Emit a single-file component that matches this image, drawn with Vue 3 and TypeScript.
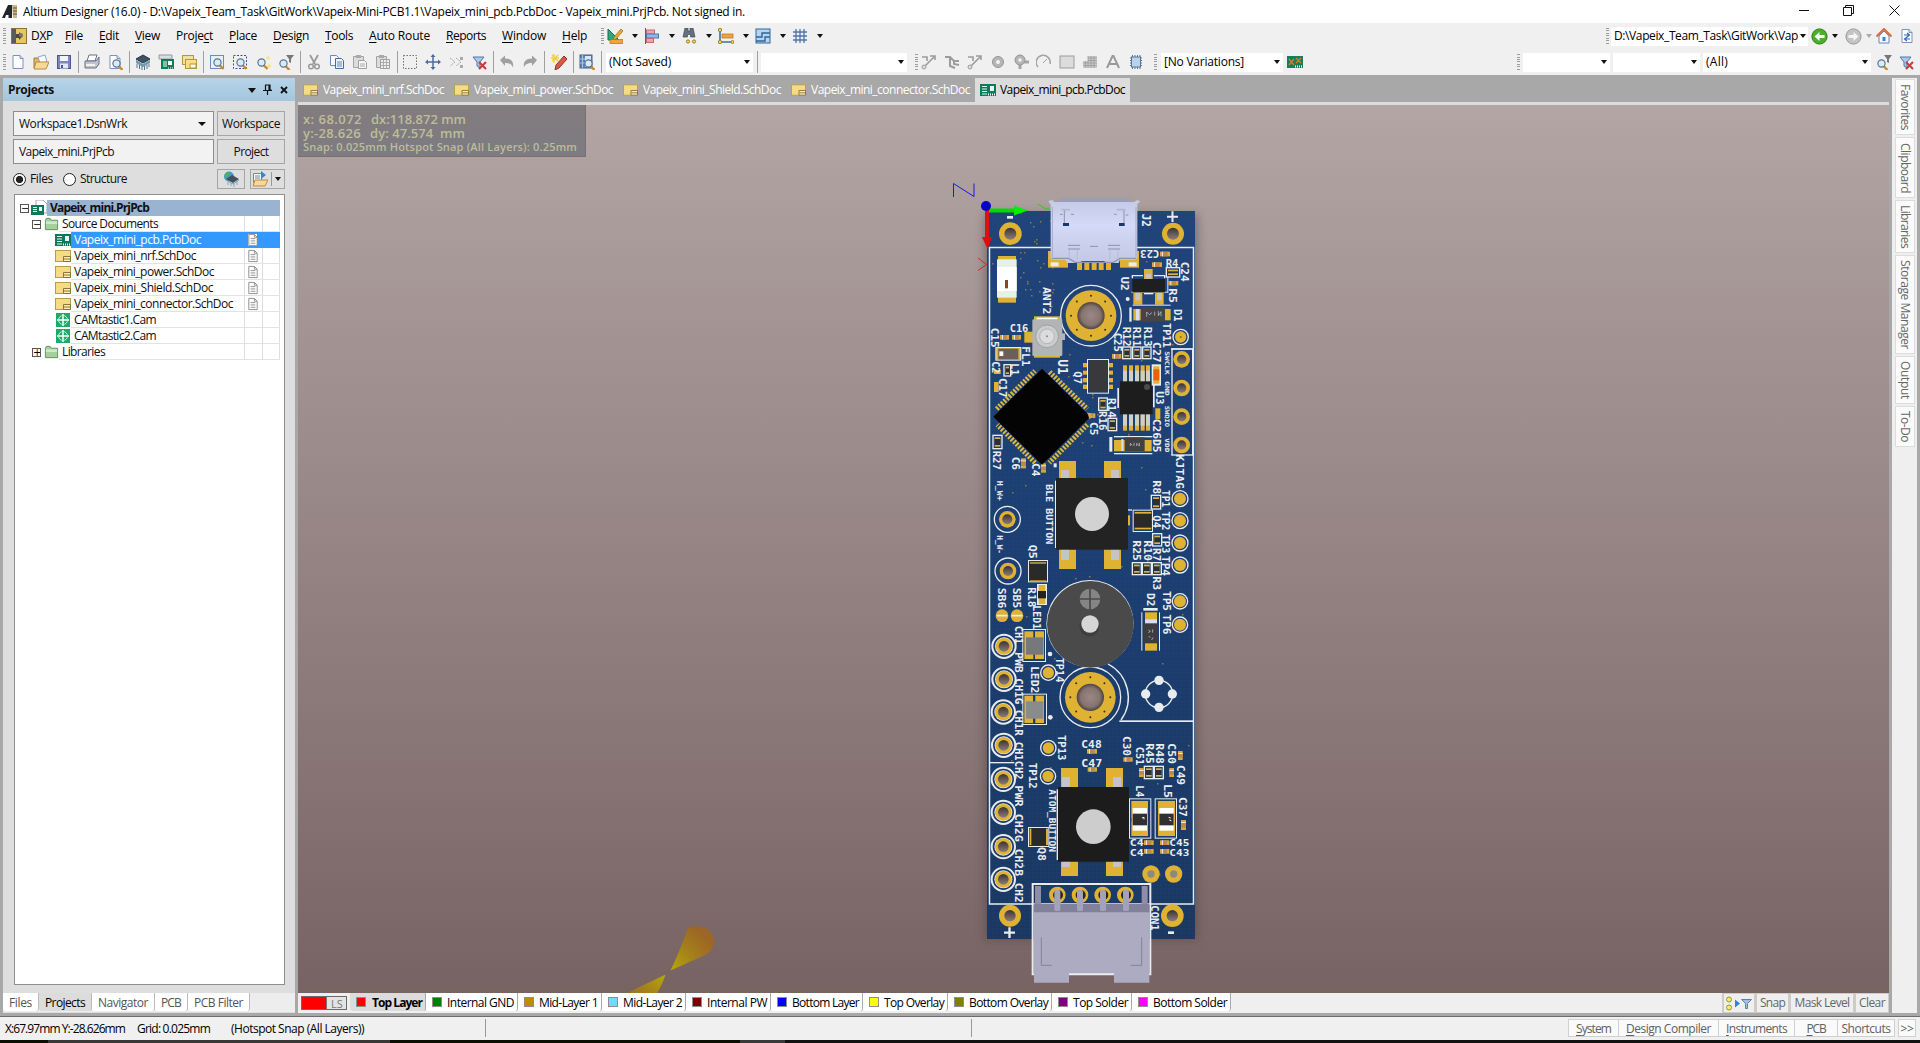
<script setup lang="ts">
type Box = [number, number, number, number]
type Label = [string, number, number, number, number]
type Ring = [number, number, number, number, number]

interface Fitted { t: string; w: number; u?: number }

const vFit = {
  mounted(el: HTMLElement, b: { value: number }) {
    const vertical = el.classList.contains('vert')
    const r = el.getBoundingClientRect()
    const natural = vertical ? r.height : r.width
    const n = Array.from(el.textContent || '').length
    el.style.letterSpacing = ((b.value - natural) / n).toFixed(3) + 'px'
  },
}

const menus: Fitted[] = [
  { t: 'DXP', w: 22, u: 1 }, { t: 'File', w: 18, u: 0 }, { t: 'Edit', w: 20, u: 0 }, { t: 'View', w: 25, u: 0 },
  { t: 'Project', w: 37, u: 5 }, { t: 'Place', w: 28, u: 0 }, { t: 'Design', w: 36, u: 0 }, { t: 'Tools', w: 28, u: 0 },
  { t: 'Auto Route', w: 61, u: 0 }, { t: 'Reports', w: 40, u: 0 }, { t: 'Window', w: 44, u: 0 }, { t: 'Help', w: 25, u: 0 },
]

const doc = '<path d="M3 1.5h7l3 3v10H3z" fill="#fdfeff" stroke="#7d93b5"/><path d="M10 1.5v3h3" fill="#cfe0f4" stroke="#7d93b5"/>'
const lens = '<path d="M10.5 11l4 4" stroke="#c98a2a" stroke-width="2.4"/><circle cx="8.5" cy="8.5" r="3.6" fill="#d7ebfa" stroke="#5c748f" stroke-width="1.2"/>'
const funnel = '<path d="M2 3h11l-4 5v6l-3-2V8z" fill="#a9c8e8" stroke="#5576a4"/>'
const icons: Record<string, string> = {
  dxp: '<rect x=".5" y=".5" width="15" height="15" fill="#e8c65a" stroke="#8a7434"/><path d="M1 1h4v14H1z" fill="#5b5a58"/><path d="M5 6h3V4l4 4-4 4v-2H5z" fill="#4a4a4a"/><circle cx="10" cy="7" r="2" fill="#777"/>',
  file: doc,
  open: '<path d="M1 4h5l1 1h6v9H1z" fill="#e3b465" stroke="#a57a35"/><path d="M5 3l7-2 2 7-7 1z" fill="#f6fafe" stroke="#8fa6c4"/><path d="M3 8h13l-3 7H1z" fill="#f7d896" stroke="#b98b3f"/>',
  save: '<rect x="1.5" y="1.5" width="13" height="13" fill="#7d86c0" stroke="#4d5695"/><rect x="4" y="2" width="8" height="5" fill="#f2f4fc"/><rect x="4" y="9.500" width="8" height="5" fill="#e3e6f4"/><rect x="5" y="11" width="2" height="3" fill="#4d5695"/>',
  print: '<path d="M5 1h8l-2 6H3z" fill="#fff" stroke="#6d6f80"/><path d="M1 7h11l3-4v7l-3 4H1z" fill="#c0c4d0" stroke="#6d7184"/><path d="M2 11h9" stroke="#f2f2f2" stroke-width="2"/>',
  preview: doc + '<g transform="translate(1 1)">' + lens + '</g>',
  stack: '<path d="M8 1l7 4-7 4-7-4z" fill="#3e5263" stroke="#273846"/><path d="M1 6l7 4 7-4v3l-7 4-7-4z" fill="#6f99ad"/><path d="M2 10v4M4.500 11v4M7 12v4M9.500 12v4M12 11v4M14 10v3" stroke="#587488"/>',
  board: '<path d="M1 1h13v4H1z" fill="#d8dde2" stroke="#939aa2"/><rect x="3" y="5" width="13" height="10" fill="#0f7d57"/><path d="M5 8h4M5 10h4M5 12h4" stroke="#fff"/><rect x="10" y="7" width="4" height="4" fill="#fff"/><path d="M10 14h5" stroke="#fff" stroke-dasharray="1 1"/>',
  sheets: '<rect x="1.500" y="1.500" width="11" height="9" fill="#f2e0a0" stroke="#b39542"/><rect x="4.500" y="5.500" width="11" height="9" fill="#f8df83" stroke="#b39542"/><rect x="9" y="10" width="6" height="4" fill="#fff" stroke="#b39542"/>',
  zoomdoc: '<rect x="1.500" y="1.500" width="13" height="13" fill="#e7f1fb" stroke="#6a8dbc"/>' + lens,
  zoomarea: '<rect x="1.500" y="1.500" width="13" height="13" fill="none" stroke="#3e4ea5" stroke-dasharray="2 1.500"/>' + lens,
  zoomsel: '<g transform="translate(-2 0)">' + lens + '</g><circle cx="13" cy="4" r="1.800" fill="#f3e67a"/><circle cx="14" cy="12" r="1.800" fill="#f3e67a"/>',
  zoomfil: '<path d="M8 1h8l-3 4v4l-2-1V5z" fill="#777"/><g transform="translate(-3 1)">' + lens + '</g>',
  cut: '<path d="M4 1l5 9M12 1L7 10" stroke="#9a9a9a" stroke-width="1.800"/><circle cx="5" cy="12.500" r="2.300" fill="none" stroke="#9a9a9a" stroke-width="1.500"/><circle cx="11" cy="12.500" r="2.300" fill="none" stroke="#9a9a9a" stroke-width="1.500"/>',
  copy: '<path d="M1.500 1.500h6l2 2v8h-8z" fill="#f6faff" stroke="#6c86b5"/><path d="M6.500 4.500h6l2 2v8h-8z" fill="#e9f1fb" stroke="#4d6aa0"/><path d="M8 8h5M8 10h5M8 12h5" stroke="#6c86b5"/>',
  paste: '<path d="M1.500 2.500h10v11h-10z" fill="#ddd" stroke="#a3a3a3"/><path d="M4 1h5v3H4z" fill="#aaa"/><path d="M6.500 6.500h6l2 2v6h-8z" fill="#f5f5f5" stroke="#9f9f9f"/><path d="M8 10h5M8 12h5" stroke="#aaa"/>',
  pastes: '<path d="M1.500 2.500h10v11h-10z" fill="#ddd" stroke="#a3a3a3"/><path d="M4 1h5v3H4z" fill="#aaa"/><path d="M5.500 5.500h9v9h-9z" fill="#eee" stroke="#9f9f9f"/><path d="M6 8.500h8M6 11.500h8M8.500 6v8M11.500 6v8" stroke="#aaa"/>',
  select: '<rect x="1.500" y="1.500" width="13" height="13" fill="none" stroke="#707070" stroke-dasharray="1.500 1.500"/>',
  move: '<path d="M8 1v14M1 8h14" stroke="#4e6c99" stroke-width="1.500"/><path d="M8 0l2.500 3h-5zM8 16l2.500-3h-5zM0 8l3-2.500v5zM16 8l-3-2.500v5z" fill="#4e6c99"/>',
  desel: '<path d="M2 4l5 4-5 4M8 4l5 4-5 4" fill="none" stroke="#a5a5a5" stroke-dasharray="2 1"/><path d="M12 3h3v3h-3zM12 11h3v3h-3z" fill="#aaa"/>',
  clearfil: funnel + '<path d="M8 8l7 7M15 8l-7 7" stroke="#c93a3a" stroke-width="2"/>',
  undo: '<path d="M1 6l5-4.500v3c6 0 9 3 8 9-1-3-3-4.500-8-4.500v3z" fill="#a0a0a0"/>',
  redo: '<path d="M15 6l-5-4.500v3c-6 0-9 3-8 9 1-3 3-4.500 8-4.500v3z" fill="#a0a0a0"/>',
  pen: '<path d="M3 0v9M0 4h8M1 1l6 6M7 1L1 7" stroke="#f1d23c" stroke-width="1.500"/><path d="M13 2l3 3-8 9-4 2 1-5z" fill="#dc5a45" stroke="#8f3527"/>',
  browse: '<rect x="1" y="1" width="12" height="13" fill="#5b83b8" stroke="#41638f"/><path d="M6 2h6v11H6z" fill="#dbe6f3"/><path d="M3.500 1v13M1 5h5M1 9h5" stroke="#a9c3e2"/><g transform="translate(1 1)">' + lens + '</g>',
  tools: '<path d="M1 1v11h11z" fill="#2fa77c" stroke="#12704e"/><path d="M14 1l2 2-7 8-3 1 1-3z" fill="#e5a93b" stroke="#8f651a" stroke-width=".7"/><rect x="3" y="11.500" width="13" height="4" fill="#f0a43c" stroke="#b5701a" stroke-width=".7"/>',
  align: '<path d="M1.500 0v16" stroke="#8b4d55"/><rect x="2.500" y="2" width="8" height="4" fill="#f2a2a6" stroke="#c06c72"/><rect x="2.500" y="6" width="12" height="4" fill="#8cb8ea" stroke="#4478b4"/><rect x="2.500" y="10.500" width="7" height="4" fill="#f2a2a6" stroke="#c06c72"/>',
  find: '<path d="M4 0h3v3h2V0h3l2 9H9.500V6.500h-3V9H2z" fill="#66707c" stroke="#444c57" stroke-width=".7"/><circle cx="7" cy="13.500" r="1.600" fill="#f1d75f" stroke="#9a7f23"/><circle cx="13" cy="13.500" r="1.600" fill="#f1d75f" stroke="#9a7f23"/>',
  dims: '<path d="M2 2v12h13" stroke="#3e6ea8" fill="none" stroke-width="1.600"/><rect x="4" y="6" width="11" height="4" fill="#f0a43c" stroke="#b5701a" stroke-width=".7"/><circle cx="2" cy="2" r="1.700" fill="#f1d75f" stroke="#9a7f23"/><circle cx="2" cy="14" r="1.700" fill="#f1d75f" stroke="#9a7f23"/><circle cx="14.500" cy="14" r="1.500" fill="#f1d75f" stroke="#9a7f23"/>',
  room: '<rect x="1" y="1" width="14" height="14" fill="#b8d3ee" stroke="#2f6499"/><path d="M1 9h6V5h8M1 13h9V9h5" stroke="#2f6499" fill="none" stroke-width="1.400"/>',
  grid: '<path d="M4 1v14M8 1v14M12 1v14M1 4h14M1 8h14M1 12h14" stroke="#5176a8" stroke-width="1.300"/>',
  route: '<path d="M4 12L13 3M1 3h5v4M9 2h5v4" stroke="#9c9c9c" fill="none" stroke-width="1.600"/><circle cx="3" cy="13" r="2" fill="#ddd" stroke="#9c9c9c"/>',
  route2: '<path d="M1 3h5l4 4h5M6 3v9l5 2M10 7v3l5 1" stroke="#9c9c9c" fill="none" stroke-width="2"/>',
  pad: '<circle cx="8" cy="8" r="5.500" fill="#b5b5b5" stroke="#969696"/><circle cx="8" cy="8" r="2" fill="#f4f4f4"/>',
  via: '<path d="M7 8h9M7 6v9" stroke="#a6a6a6" stroke-width="3"/><circle cx="7" cy="6" r="5" fill="#b5b5b5" stroke="#969696"/><circle cx="7" cy="6" r="1.800" fill="#f4f4f4"/>',
  arc: '<path d="M2 13a7 7 0 1 1 12-3" fill="none" stroke="#a2a2a2" stroke-width="1.500"/><path d="M7 9l4-4" stroke="#a2a2a2"/>',
  fill: '<rect x="1" y="2" width="14" height="12" fill="#dcdcdc" stroke="#9c9c9c"/>',
  poly: '<path d="M1 7h5V2h9v12H1z" fill="#c9c9c9"/><path d="M1 9h14M1 11.500h14M6 6.500h9M6 4h9M3.500 7v7M6 2v12M9 2v12M12 2v12" stroke="#9c9c9c" stroke-width=".8"/>',
  str: '<path d="M2 14L7.500 2h1L14 14M4.500 10h7" fill="none" stroke="#9a9a9a" stroke-width="2"/>',
  chip: '<path d="M2 4h12M2 6.500h12M2 9h12M2 11.500h12M4.500 1v14M7 1v14M9.500 1v14M12 1v14" stroke="#5a7896"/><rect x="3.500" y="3" width="9" height="10" fill="#b9d4ea" stroke="#5a7896"/>',
  variant: '<rect x="0" y="2" width="16" height="12" fill="#11805c"/><path d="M2 5l5 6M7 5l-5 6M9 4l5 5M14 4L9 9" stroke="#e0762b" stroke-width="1.500"/><path d="M8 12.500h7" stroke="#fff" stroke-width="2" stroke-dasharray="1 1"/>',
  back: '<circle cx="8" cy="8" r="7.600" fill="#4caf2a" stroke="#2b7a12"/><path d="M3 8l5-4.500v3h5v3H8v3z" fill="#fff"/>',
  fwd: '<circle cx="8" cy="8" r="7.600" fill="#c4c4c4" stroke="#989898"/><path d="M13 8L8 3.500v3H3v3h5v3z" fill="#f6f6f6"/>',
  home: '<path d="M3 8v7h10V8L8 3z" fill="#f4f8fd" stroke="#6c86ae"/><path d="M0.500 8.500L8 1l7.500 7.500" fill="none" stroke="#dc6a3a" stroke-width="2"/><path d="M6.500 9h3v4h-3z" fill="#3f82d6"/>',
  refresh: doc + '<path d="M5 7h5M8 5l2.500 2L8 9M11 11H6M8 9l-2.500 2L8 13" fill="none" stroke="#2d6cc0" stroke-width="1.200"/>',
  sch: '<rect x=".5" y="2.500" width="15" height="11" fill="#f4dc85" stroke="#bd9d4c"/><path d="M8.500 8.500h7v5h-7zM9 11h6" fill="#fbeeb9" stroke="#8d7434"/>',
  pcb: '<rect x="0" y="2" width="16" height="12" fill="#0e7a5a"/><path d="M2 4.500h5M2 7h5M2 9.500h5M2 12h5" stroke="#e9f7f0"/><rect x="10" y="4" width="4" height="5" fill="#e9f7f0"/><path d="M8 12.500h8" stroke="#fff" stroke-width="2" stroke-dasharray="1 1"/>',
  prj: '<path d="M5 0h7l4 4v9H5z" fill="#fff" stroke="#98a4c4"/><rect x="0" y="5" width="13" height="10" fill="#0e7a5a"/><path d="M2 7.500h4M2 9.500h4M2 11.500h4" stroke="#e9f7f0"/><rect x="8" y="7" width="3" height="4" fill="#e9f7f0"/>',
  folder: '<path d="M1.500 4l1-2h4l1 2h7v10h-13z" fill="#a5cf9d" stroke="#5f8f5b"/><path d="M2 5h12v3H2z" fill="#cde8c6"/>',
  cam: '<rect x="1" y="1" width="14" height="14" fill="#1faa6c"/><path d="M8 2v12M2 8h12" stroke="#fff" stroke-width="1.500"/><circle cx="8" cy="8" r="4.500" fill="none" stroke="#bff0d8"/>',
  page: '<path d="M2.500 1.500h6l3 3v9h-9zM8.500 1.500v3h3M4.500 6h5M4.500 8.500h5M4.500 11h5" fill="none" stroke="#8b8b8b"/>',
  world: '<circle cx="6" cy="5.500" r="5" fill="#3f9bd0"/><path d="M2 3c3-3 5-1 4 1s-3 2-3 4z" fill="#54b348"/><path d="M9 4l7 4-6 4-7-4z" fill="#45505c"/><path d="M3 9l7 4 6-4M5 11v3M8 12v3M11 12v4M14 10v4" stroke="#7fa5b8" fill="none"/>',
  opendoc: '<path d="M1.500 2.500h8v9h-8z" fill="#f2f7fd" stroke="#6c86b5"/><path d="M3 5h5M3 7h5" stroke="#6c86b5"/><path d="M9 0l5 4-5 4z" fill="#3d7fe0"/><path d="M3 9h13l-3 6H1z" fill="#f7d896" stroke="#b98b3f"/>',
  snapf: '<circle cx="3" cy="3.500" r="2.500" fill="#f2ef6c" stroke="#99962b"/><circle cx="3" cy="11.500" r="2.500" fill="#f2ef6c" stroke="#99962b"/><path d="M9 3.500v8l5-4z" fill="#2f83d8"/><path d="M15.500 3.500h10l-4 4v5h-2v-5z" fill="#a4bde4" stroke="#5f7fb8"/>',
}

const row1 = ['tools', 'align', 'find', 'dims', 'room', 'grid']
type Cell = string | number
// numbers are separators with their slot width
const row2: Cell[] = ['file', 'open', 'save', 5, 'print', 'preview', 5, 'stack', 'board', 'sheets', 5, 'zoomdoc', 'zoomarea', 'zoomsel', 'zoomfil', 5,
  'cut', 'copy', 'paste', 'pastes', 4, 'select', 'move', 'desel', 'clearfil', 5, 'undo', 'redo', 6, 'pen', 5, 'browse', 6]
const row2b = ['route', 'route2', 'route', 'pad', 'via', 'arc', 'fill', 'poly', 'str', 'chip']

const docTabs = [
  { t: 'Vapeix_mini_nrf.SchDoc', w: 121 }, { t: 'Vapeix_mini_power.SchDoc', w: 139 },
  { t: 'Vapeix_mini_Shield.SchDoc', w: 138 }, { t: 'Vapeix_mini_connector.SchDoc', w: 159 },
]

const tree = [
  { t: 'Vapeix_mini.PrjPcb', w: 99, d: 0, ic: 'prj', ex: '-', cls: 'root', pg: false },
  { t: 'Source Documents', w: 96, d: 1, ic: 'folder', ex: '-', cls: '', pg: false },
  { t: 'Vapeix_mini_pcb.PcbDoc', w: 127, d: 2, ic: 'pcb', ex: '', cls: 'sel', pg: true },
  { t: 'Vapeix_mini_nrf.SchDoc', w: 122, d: 2, ic: 'sch', ex: '', cls: '', pg: true },
  { t: 'Vapeix_mini_power.SchDoc', w: 140, d: 2, ic: 'sch', ex: '', cls: '', pg: true },
  { t: 'Vapeix_mini_Shield.SchDoc', w: 139, d: 2, ic: 'sch', ex: '', cls: '', pg: true },
  { t: 'Vapeix_mini_connector.SchDoc', w: 159, d: 2, ic: 'sch', ex: '', cls: '', pg: true },
  { t: 'CAMtastic1.Cam', w: 82, d: 2, ic: 'cam', ex: '', cls: '', pg: false },
  { t: 'CAMtastic2.Cam', w: 82, d: 2, ic: 'cam', ex: '', cls: '', pg: false },
  { t: 'Libraries', w: 43, d: 1, ic: 'folder', ex: '+', cls: '', pg: false },
]

const panelTabs = [{ t: 'Files', w: 23 }, { t: 'Projects', w: 40 }, { t: 'Navigator', w: 50 }, { t: 'PCB', w: 20 }, { t: 'PCB Filter', w: 49 }]
const layers = [
  { t: 'Top Layer', w: 50, c: '#ff0000' }, { t: 'Internal GND', w: 67, c: '#008000' }, { t: 'Mid-Layer 1', w: 59, c: '#bd8f00' },
  { t: 'Mid-Layer 2', w: 59, c: '#70dbfa' }, { t: 'Internal PW', w: 60, c: '#800000' }, { t: 'Bottom Layer', w: 67, c: '#0000ff' },
  { t: 'Top Overlay', w: 60, c: '#ffff00' }, { t: 'Bottom Overlay', w: 79, c: '#808000' }, { t: 'Top Solder', w: 55, c: '#800080' },
  { t: 'Bottom Solder', w: 74, c: '#ff00ff' },
]
const maskBtns = [{ t: 'Snap', w: 25, b: 34 }, { t: 'Mask Level', w: 55, b: 65 }, { t: 'Clear', w: 26, b: 35 }]
const statusBtns = [{ t: 'System', w: 35, b: 50, u: 0 }, { t: 'Design Compiler', w: 85, b: 100, u: 0 }, { t: 'Instruments', w: 61, b: 76, u: 0 }, { t: 'PCB', w: 19, b: 43, u: 0 }, { t: 'Shortcuts', w: 49, b: 57, u: -1 }]
const sideTabs = [{ t: 'Favorites', w: 46, h: 56 }, { t: 'Clipboard', w: 50, h: 61 }, { t: 'Libraries', w: 43, h: 53 }, { t: 'Storage Manager', w: 89, h: 99 }, { t: 'Output', w: 38, h: 48 }, { t: 'To-Do', w: 31, h: 41 }]

interface Zone {
  at: string
  under: [number, number, number, number, string][]
  rings: Ring[]
  parts: Box[]
  caps: Box[]
  v: Label[]
  h: Label[]
}
const G = '#dfb233', K = '#2a2a2b', S = '#c4c4c6', N = '#1c3d69', W = '#e9ecef'
// Coordinates inside a zone are in thirds of a pixel. Rings: cx, cy, silk, copper, hole.
const zones: Zone[] = [
  {
    at: 'translate(940 175) scale(.33333)',
    under: [
      [324, 228, 60, 50, G], [540, 228, 57, 50, G], [332, 262, 24, 12, W], [566, 262, 24, 12, W],
      [411, 262, 15, 23, G], [433, 262, 15, 23, G], [455, 262, 15, 23, G], [476, 262, 15, 23, G], [498, 262, 15, 23, G],
      [174, 243, 54, 140, G], [171, 253, 59, 115, '#e6f2e6'], [171, 276, 59, 72, '#ffffff'], [195, 315, 9, 25, '#8a4a10'],
      [201, 123, 18, 8, W],
      [282, 424, 78, 124, G], [253, 470, 30, 33, G], [290, 428, 62, 8, '#fff'],
      [612, 282, 26, 30, G], [617, 297, 16, 14, S], [574, 350, 108, 3, W], [580, 352, 27, 37, G], [645, 352, 26, 37, G], [612, 354, 28, 4, W],
      [586, 352, 15, 24, S], [651, 352, 15, 24, S], [578, 389, 114, 3, W],
      [568, 397, 7, 43, W], [580, 402, 112, 34, G], [588, 402, 10, 34, '#dcdcf0'], [602, 397, 73, 43, '#454547'], [682, 304, 3, 50, W],
      [166, 516, 78, 41, W], [169, 519, 72, 36, G], [175, 521, 60, 32, '#6b5f5c'], [178, 529, 12, 14, '#fff4f6'],
      [694, 520, 61, 4, W],
    ],
    rings: [[211, 176, 0, 34, 18], [699, 176, 0, 33, 18], [453, 422, 91, 76, 41], [722, 486, 23, 17, 0]],
    parts: [[548, 516, 25, 35], [578, 516, 25, 35], [608, 516, 25, 35], [679, 278, 40, 28]],
    caps: [[180, 480, 27, 14], [216, 480, 27, 14], [660, 230, 30, 14], [636, 262, 30, 14], [685, 318, 30, 13], [516, 537, 28, 14]],
    v: [['J2', 607, 116, 40, 36], ['C24', 723, 260, 60, 34], ['U2', 544, 305, 42, 34], ['R5', 688, 340, 44, 32], ['D1', 703, 402, 38, 32], ['TP11', 669, 444, 74, 32],
      ['ANT2', 309, 336, 82, 32], ['C15', 154, 458, 60, 32], ['FL1', 246, 514, 60, 32], ['R12', 550, 455, 60, 30], ['R11', 580, 455, 60, 30], ['R13', 611, 455, 60, 30],
      ['C25', 521, 473, 58, 30], ['C27', 638, 501, 62, 32]],
    h: [['R4', 677, 275, 38, 34], ['C16', 209, 470, 56, 34]],
  },
  {
    at: 'translate(970 340) scale(.33333)',
    under: [
      [72, 126, 14, 30, G], [72, 90, 20, 12, G],
      [339, 69, 90, 13, G], [339, 92, 90, 12, G], [339, 114, 90, 13, G], [339, 134, 90, 13, G], [351, 57, 66, 104, W], [354, 60, 60, 98, N], [357, 60, 54, 95, '#39393b'],
      [442, 144, 5, 60, W], [549, 130, 5, 72, W],
      ...[459, 477, 495, 512, 528].flatMap((x) => [[x, 76, 12, 196, G], [x, 92, 12, 165, '#d0cfc4']] as [number, number, number, number, string][]),
      [450, 124, 98, 99, '#1d1d1e'],
      [545, 73, 28, 64, W], [550, 79, 18, 52, G], [550, 88, 18, 33, '#e8620c'],
      [556, 205, 15, 32, G],
      [432, 288, 115, 4, W], [432, 339, 115, 4, W], [418, 291, 9, 44, W], [432, 300, 113, 34, G], [454, 297, 6, 36, '#dcdcf0'], [464, 292, 60, 42, '#414143'],
      [251, 370, 9, 12, W],
      [267, 363, 51, 53, G], [402, 363, 51, 53, G], [267, 628, 51, 59, G], [402, 628, 51, 59, G],
      [273, 390, 24, 26, S], [423, 390, 24, 26, S], [273, 628, 24, 32, S], [423, 628, 24, 32, S],
      [255, 422, 4, 202, W], [258, 414, 216, 215, '#232324'],
      [474, 508, 12, 4, W], [474, 526, 6, 30, G],
      [488, 509, 61, 67, W], [491, 512, 55, 61, N], [494, 516, 50, 52, G], [492, 521, 53, 42, K],
      [174, 660, 60, 67, W], [177, 663, 54, 61, N], [180, 667, 48, 56, G], [178, 671, 53, 50, K],
      [604, 25, 66, 4, W], [604, 25, 4, 321, W], [666, 25, 4, 321, W], [604, 343, 66, 4, W],
    ],
    rings: [[635, 58, 0, 25, 14], [635, 144, 0, 25, 14], [635, 230, 0, 25, 14], [635, 315, 0, 25, 14], [112, 538, 39, 25, 15], [114, 693, 39, 25, 15],
      [630, 476, 24, 18, 0], [630, 542, 24, 18, 0], [630, 609, 24, 18, 0], [630, 675, 24, 18, 0]],
    parts: [[386, 174, 26, 37], [414, 235, 26, 37], [69, 286, 27, 40], [544, 466, 28, 41], [548, 581, 27, 37], [487, 668, 27, 36], [517, 668, 27, 36], [547, 668, 27, 36], [102, 74, 20, 34]],
    caps: [[153, 355, 15, 30], [213, 370, 15, 28], [352, 220, 24, 14]],
    v: [['C2', 67, 64, 36, 30], ['L1', 122, 70, 36, 32], ['C17', 88, 114, 58, 32], ['U1', 263, 58, 46, 40], ['Q7', 311, 94, 38, 32], ['R14', 414, 174, 60, 30], ['R16', 388, 213, 58, 30],
      ['C5', 360, 246, 40, 32], ['U3', 557, 154, 40, 34], ['C26D5', 550, 236, 102, 34], ['R27', 69, 332, 58, 32], ['C6', 126, 350, 40, 32], ['C4', 187, 369, 40, 32],
      ['BLE BUTTON', 229, 433, 180, 26], ['H_W+', 81, 422, 60, 24], ['H_W-', 81, 586, 56, 24], ['Q5', 178, 614, 42, 34], ['Q4', 550, 526, 38, 32], ['R8', 548, 421, 42, 32],
      ['TP1', 577, 450, 52, 32], ['TP2', 577, 514, 57, 32], ['TP3', 577, 583, 57, 32], ['TP4', 577, 648, 60, 32], ['R7', 550, 624, 40, 32], ['R25', 490, 601, 62, 32], ['R10', 522, 601, 62, 32],
      ['KJTAG', 618, 343, 104, 32], ['SWCLK', 585, 34, 70, 18], ['GND', 585, 123, 44, 18], ['SWDIO', 585, 197, 64, 18], ['VDD', 585, 295, 42, 18]],
    h: [],
  },
  {
    at: 'translate(970 560) scale(.33333)',
    under: [
      [201, 72, 30, 63, W], [206, 75, 20, 57, G], [204, 93, 24, 22, '#222'],
      [157, 207, 71, 99, W], [160, 210, 65, 93, N], [163, 214, 27, 83, G], [195, 214, 27, 83, G], [168, 232, 52, 52, '#77787b'],
      [157, 401, 74, 94, W], [160, 404, 68, 88, N], [163, 407, 26, 82, G], [196, 407, 26, 82, G], [168, 424, 52, 52, '#8a8b8d'],
      [520, 144, 43, 8, W], [525, 157, 36, 115, G], [525, 178, 36, 14, '#dcdcf0'], [522, 190, 42, 60, '#3d3d3f'], [514, 157, 3, 115, W], [567, 157, 3, 115, W],
      [448, 481, 222, 5, W], [57, 606, 76, 4, W],
      [273, 625, 50, 40, G], [408, 625, 50, 40, G],
    ],
    rings: [[102, 259, 35, 25, 16], [102, 358, 35, 25, 16], [100, 456, 35, 25, 16], [101, 556, 35, 25, 16], [235, 338, 23, 17, 0], [235, 564, 23, 17, 0],
      [361, 412, 91, 76, 41], [630, 124, 23, 18, 0], [630, 194, 23, 18, 0]],
    parts: [[523, 619, 27, 37], [553, 619, 27, 37]],
    caps: [[351, 567, 30, 14], [353, 622, 28, 13], [460, 592, 28, 13], [507, 624, 14, 27], [598, 624, 14, 27], [624, 573, 14, 27]],
    v: [['SB6', 84, 83, 62, 32], ['SB5', 130, 83, 62, 32], ['R18', 173, 82, 60, 34], ['LED1', 188, 136, 72, 32], ['LED2', 184, 318, 82, 32], ['TP14', 258, 293, 74, 32], ['R3', 550, 49, 42, 32],
      ['D2', 531, 99, 40, 34], ['TP5', 580, 93, 60, 32], ['TP6', 580, 163, 60, 32], ['CH1', 136, 197, 56, 32], ['PWB', 136, 276, 62, 32], ['CH1G', 136, 355, 78, 32], ['CH1R', 136, 449, 78, 32],
      ['CH1CH2', 136, 545, 114, 32], ['TP13', 264, 525, 76, 32], ['C30', 460, 528, 60, 34], ['C51', 498, 560, 56, 32], ['R45', 527, 550, 62, 32], ['R48', 558, 550, 62, 32], ['C50', 595, 550, 62, 32]],
    h: [['C48', 334, 564, 61, 34], ['C47', 334, 620, 63, 34]],
  },
  {
    at: 'translate(970 730) scale(.33333)',
    under: [
      [273, 114, 51, 60, G], [408, 114, 51, 60, G], [273, 394, 51, 44, G], [408, 394, 51, 44, G],
      [276, 141, 24, 32, S], [429, 141, 24, 32, S], [276, 394, 24, 17, S], [429, 394, 24, 17, S],
      [174, 291, 64, 60, W], [177, 294, 58, 54, N], [179, 296, 55, 49, G], [184, 294, 44, 52, K], [260, 178, 4, 212, W], [264, 171, 213, 224, '#1c1c1d'],
      [477, 205, 67, 121, W], [480, 208, 61, 115, N], [484, 213, 50, 105, G], [488, 234, 43, 68, '#fff'], [488, 251, 43, 35, '#303033'], [480, 264, 4, 10, N],
      [554, 205, 67, 121, W], [557, 208, 61, 115, N], [564, 213, 51, 105, G], [568, 234, 43, 68, '#fff'], [568, 251, 43, 35, '#303033'],
      [594, 604, 18, 8, W],
    ],
    rings: [[234, 139, 23, 17, 0], [100, 148, 35, 25, 16], [100, 247, 35, 25, 16], [100, 350, 35, 25, 16], [100, 448, 35, 25, 16], [543, 432, 0, 26, 0], [611, 432, 0, 26, 0],
      [120, 557, 0, 33, 17], [607, 557, 0, 34, 17]],
    parts: [],
    caps: [[633, 270, 15, 30], [522, 331, 29, 14], [570, 331, 28, 14], [522, 357, 29, 14], [570, 357, 28, 14]],
    v: [['TP12', 178, 98, 78, 32], ['ATOM_BUTTON', 238, 178, 188, 26], ['Q8', 204, 351, 42, 32], ['L4', 498, 166, 36, 32], ['L5', 581, 162, 42, 34], ['C49', 622, 105, 60, 34], ['C37', 628, 201, 60, 34],
      ['PWR', 136, 166, 64, 32], ['CH2G', 136, 251, 84, 32], ['CH2B', 136, 356, 82, 32], ['CH2', 136, 458, 60, 32], ['CON1', 544, 526, 76, 34]],
    h: [['C4', 479, 348, 42, 25], ['C45', 598, 348, 60, 25], ['C43', 598, 378, 60, 25], ['C4', 479, 378, 42, 25]],
  },
]

// gold via specks scattered over the copper
const specks: [number, number][] = []
let seed = 11
const rnd = () => { seed = (seed * 16807) % 2147483647; return seed / 2147483647 }
for (let i = 0; i < 34; i++) specks.push([1020 + Math.floor(rnd() * 34), 219 + Math.floor(rnd() * 88)])
for (let i = 0; i < 60; i++) specks.push([992 + Math.floor(rnd() * 198), 250 + Math.floor(rnd() * 640)])
const dots = [0, 45, 90, 135, 180, 225, 270, 315].map((a) => [Math.cos((a * Math.PI) / 180) * 20, Math.sin((a * Math.PI) / 180) * 20])
</script>

<template>
  <div class="app">
    <header class="title">
      <svg class="logo" width="16" height="16" viewBox="0 0 16 16"><path d="M0 14L6 1h4v13H6.500v-3H4l-1 3z" fill="#22252a" /><path d="M10 1h5v13h-4z" fill="#c9b58a" /><path d="M11 4h4M11 7h4M11 10h4" stroke="#5d523c" /></svg>
      <span v-fit="722" class="fit">Altium Designer (16.0) - D:\Vapeix_Team_Task\GitWork\Vapeix-Mini-PCB1.1\Vapeix_mini_pcb.PcbDoc - Vapeix_mini.PrjPcb. Not signed in.</span>
      <svg class="winctl" width="104" height="16" viewBox="0 0 104 16" fill="none" stroke="#111"><path d="M0 8.500h10M44.500 5.500h8v8h-8zM46.500 5V3.500h8v8H53M90.500 3.500l10 10M100.500 3.500l-10 10" /></svg>
    </header>

    <div class="bar menu">
      <i class="grip" /><svg class="ic dxp" viewBox="0 0 16 16" v-html="icons.dxp" />
      <span v-for="m in menus" :key="m.t" class="m"><span v-fit="m.w" class="fit">{{ m.t.slice(0, m.u) }}<u>{{ m.t[m.u!] }}</u>{{ m.t.slice(m.u! + 1) }}</span></span>
      <i class="grip g2" />
      <span v-for="n in row1" :key="n" class="drop"><svg class="ic" viewBox="0 0 16 16" v-html="icons[n]" /><b class="tri" /></span>
      <span class="grow" />
      <i class="grip" />
      <span class="combo path"><span v-fit="184" class="fit">D:\Vapeix_Team_Task\GitWork\Vap</span><b class="tri" /></span>
      <svg class="ic big" viewBox="-.5 -.5 17 17" v-html="icons.back" /><b class="tri" />
      <svg class="ic big" viewBox="-.5 -.5 17 17" v-html="icons.fwd" /><b class="tri dim" />
      <svg class="ic hm" viewBox="0 0 16 16" v-html="icons.home" /><svg class="ic rf" viewBox="0 0 16 16" v-html="icons.refresh" />
    </div>

    <div class="bar tools">
      <i class="grip" />
      <template v-for="(c, i) in row2" :key="i">
        <i v-if="typeof c === 'number'" class="sep" :style="{ width: c + 'px' }" />
        <span v-else class="cell"><svg class="ic" viewBox="0 0 16 16" v-html="icons[c]" /></span>
      </template>
      <span class="combo ns"><span v-fit="62" class="fit">(Not Saved)</span><b class="tri" /></span>
      <i class="sep s8" />
      <span class="combo em"><span /><b class="tri" /></span>
      <i class="grip g3" />
      <span v-for="(n, i) in row2b" :key="'r' + i" class="cell"><svg class="ic" viewBox="0 0 16 16" v-html="icons[n]" /></span>
      <i class="grip g4" />
      <span class="combo nv"><span v-fit="80" class="fit">[No Variations]</span><b class="tri" /></span>
      <svg class="ic vr" viewBox="0 0 16 16" v-html="icons.variant" />
      <span class="grow" />
      <i class="grip" />
      <span class="combo c1"><span /><b class="tri" /></span>
      <span class="combo c1"><span /><b class="tri" /></span>
      <span class="combo all"><span v-fit="22" class="fit">(All)</span><b class="tri" /></span>
      <svg class="ic l1" viewBox="0 0 16 16" v-html="icons.zoomfil" /><svg class="ic l2" viewBox="0 0 16 16" v-html="icons.clearfil" />
    </div>

    <main class="work">
      <aside class="panel">
        <div class="phead">
          <b v-fit="46" class="fit">Projects</b>
          <svg width="44" height="12" viewBox="0 0 44 12"><path d="M1 4h8L5 9z" fill="#111" /><path d="M18 1h5v5h1.500M16 6.500h9M20.500 7v4M22 1v5M18.500 1v5" fill="none" stroke="#111" stroke-width="1.200" /><path d="M34 3l6 6M40 3l-6 6" stroke="#111" stroke-width="1.800" /></svg>
        </div>
        <div class="pform">
          <div class="frow"><span class="inp"><span v-fit="108" class="fit">Workspace1.DsnWrk</span><b class="tri big" /></span><span class="btn"><span v-fit="58" class="fit">Workspace</span></span></div>
          <div class="frow"><span class="inp"><span v-fit="95" class="fit">Vapeix_mini.PrjPcb</span></span><span class="btn"><span v-fit="35" class="fit">Project</span></span></div>
          <div class="frow radios">
            <i class="radio on" /><span v-fit="23" class="fit">Files</span><i class="radio r2" /><span v-fit="47" class="fit">Structure</span>
            <span class="grow" />
            <span class="sb"><svg class="ic" viewBox="0 0 16 16" v-html="icons.world" /></span>
            <span class="sb w"><svg class="ic" viewBox="0 0 16 16" v-html="icons.opendoc" /><i class="vl" /><b class="tri" /></span>
          </div>
        </div>
        <div class="tree">
          <div v-for="r in tree" :key="r.t" class="tr" :class="[r.cls, 'd' + r.d]">
            <span class="ind"><span v-if="r.ex" class="ex">{{ r.ex === '-' ? '−' : '+' }}</span></span>
            <svg class="ic" viewBox="0 0 16 16" v-html="icons[r.ic]" />
            <span class="name"><span v-fit="r.w" class="fit">{{ r.t }}</span></span>
            <span class="col c18"><svg v-if="r.pg" width="12" height="14" viewBox="1 0 12 15" :class="{ lit: r.cls === 'sel' }" v-html="icons.page" /></span>
            <span class="col c17" />
          </div>
        </div>
        <div class="ptabs">
          <span v-for="(p, i) in panelTabs" :key="p.t" class="ptab" :class="{ on: i === 1 }"><span v-fit="p.w" class="fit">{{ p.t }}</span></span>
        </div>
      </aside>

      <section class="doc">
        <div class="dtabs">
          <span v-for="d in docTabs" :key="d.t" class="dtab"><svg class="ic" viewBox="0 0 16 16" v-html="icons.sch" /><span v-fit="d.w" class="fit">{{ d.t }}</span></span>
          <span class="dtab on"><svg class="ic" viewBox="0 0 16 16" v-html="icons.pcb" /><span v-fit="125" class="fit">Vapeix_mini_pcb.PcbDoc</span></span>
        </div>
        <div class="canvas">
          <svg width="1591" height="888" viewBox="298 105 1591 888">
            <defs>
              <linearGradient id="hole" x1="0" y1="0" x2="0" y2="1"><stop offset="0" stop-color="#3a3433" /><stop offset="1" stop-color="#8d7c79" /></linearGradient>
              <radialGradient id="hole2"><stop offset="0" stop-color="#9b8886" /><stop offset=".7" stop-color="#86746f" /><stop offset="1" stop-color="#4e4340" /></radialGradient>
              <linearGradient id="pcbg" x1="0" y1="0" x2="0" y2="1"><stop offset="0" stop-color="#20437a" /><stop offset=".5" stop-color="#1c3e70" /><stop offset="1" stop-color="#1a3862" /></linearGradient>
              <linearGradient id="usb" x1="0" y1="0" x2="0" y2="1"><stop offset="0" stop-color="#c4c9e6" /><stop offset=".4" stop-color="#d3d9f6" /><stop offset="1" stop-color="#c3c8e4" /></linearGradient>
              <radialGradient id="fan" gradientUnits="userSpaceOnUse" cx="668" cy="972" r="52"><stop offset="0" stop-color="#b9ae00" /><stop offset=".5" stop-color="#a5841a" /><stop offset="1" stop-color="#9d6526" /></radialGradient>
              <pattern id="mesh" width="4" height="4" patternUnits="userSpaceOnUse"><path d="M0 0h2v2H0z" fill="#2a528c" opacity=".13" /></pattern>
              <filter id="soft" x="-10%" y="-5%" width="120%" height="110%"><feGaussianBlur stdDeviation="5" /></filter>
            </defs>
            <path d="M670.500 970.500C677 957 683 942 688 928c6-4 26-2 26 13 0 8-4 12-11 15zM665.500 974.500L627 993h30c4-6 7-13 8.500-18.500z" fill="url(#fan)" />
            <rect x="984" y="214" width="214" height="726" fill="#4b3d3d" opacity=".45" filter="url(#soft)" />
            <rect x="987" y="211" width="208" height="728" fill="url(#pcbg)" />
            <rect x="987" y="211" width="208" height="728" fill="url(#mesh)" />
            <rect v-for="(s, i) in specks" :key="'s' + i" :x="s[0]" :y="s[1]" width="1.500" height="1.500" fill="#8f7a3c" />
            <path d="M989 247.500H1193.500V904H989.500V247" fill="none" stroke="#e9ecef" stroke-width="1.500" />
            <path d="M1108 664a38 38 0 0 1 13 56" fill="none" stroke="#e9ecef" stroke-width="1.400" />

            <g v-for="z in zones" :key="z.at" :transform="z.at">
              <rect v-for="(u, i) in z.under" :key="i" :x="u[0]" :y="u[1]" :width="u[2]" :height="u[3]" :fill="u[4]" />
              <g v-for="(p, i) in z.parts" :key="'p' + i">
                <rect :x="p[0]" :y="p[1]" :width="p[2]" :height="p[3]" fill="#1c3d69" stroke="#e9ecef" stroke-width="4" />
                <rect :x="p[0] + 5" :y="p[1] + 6" :width="p[2] - 10" :height="p[3] - 12" fill="#d8b24a" />
                <rect :x="p[0] + 5" :y="p[1] + 11" :width="p[2] - 10" :height="p[3] - 22" fill="#2d2f36" />
              </g>
              <g v-for="(p, i) in z.caps" :key="'c' + i">
                <rect :x="p[0]" :y="p[1]" :width="p[2]" :height="p[3]" fill="#d9a83a" />
                <rect :x="p[2] > p[3] ? p[0] + 7 : p[0]" :y="p[2] > p[3] ? p[1] : p[1] + 7" :width="p[2] > p[3] ? p[2] - 14 : p[2]" :height="p[2] > p[3] ? p[3] : p[3] - 14" fill="#b98a4c" />
                <rect :x="p[2] > p[3] ? p[0] + 6 : p[0]" :y="p[2] > p[3] ? p[1] : p[1] + 6" :width="p[2] > p[3] ? 3 : p[2]" :height="p[2] > p[3] ? p[3] : 3" fill="#ece6d6" />
              </g>
              <g v-for="(r, i) in z.rings" :key="'r' + i">
                <circle v-if="r[2]" :cx="r[0]" :cy="r[1]" :r="r[2]" fill="none" stroke="#e9ecef" :stroke-width="r[2] === 35 ? 6 : 4" />
                <circle v-if="r[2] === 35" :cx="r[0]" :cy="r[1]" r="27" fill="#e9ecef" />
                <circle :cx="r[0]" :cy="r[1]" :r="r[3]" fill="#dfb233" />
                <circle v-if="r[4]" :cx="r[0]" :cy="r[1]" :r="r[4]" :fill="r[4] > 30 ? 'url(#hole2)' : 'url(#hole)'" />
              </g>
              <text v-for="(t, i) in z.v" :key="'v' + i" class="silk" :transform="`translate(${t[1]} ${t[2]}) rotate(90)`" :font-size="t[4]" :textLength="t[3]" lengthAdjust="spacingAndGlyphs">{{ t[0] }}</text>
              <text v-for="(t, i) in z.h" :key="'h' + i" class="silk" :x="t[1]" :y="t[2]" :font-size="t[4]" :textLength="t[3]" lengthAdjust="spacingAndGlyphs">{{ t[0] }}</text>
            </g>

            <!-- USB socket, coax jack and SOT body -->
            <g transform="translate(940 175) scale(.33333)">
              <text class="silk" transform="translate(658 225) rotate(180)" font-size="34" textLength="58" lengthAdjust="spacingAndGlyphs">C23</text>
              <path d="M681 125h33M697.500 109v32" stroke="#e9ecef" stroke-width="6" />
              <path d="M357 69h211l4 14H353z" fill="#9a9db3" />
              <path d="M325 78l12-3 6 6h240l8-6 10 4-9 9v160l-8 6h-44l-4 10h-30l-16-6h-62l-14 6h-32l-6-10h-38l-6-6V90z" fill="url(#usb)" />
              <path d="M337 96v150M588 96v150" stroke="#a5a9c4" stroke-width="3" />
              <path d="M336 250h50l20 12h114l20-12h48" fill="none" stroke="#9094b0" stroke-width="4" />
              <path d="M364 104h26M530 104h26" stroke="#b4b8d0" stroke-width="5" />
              <path d="M373 106v38M360 118h8M393 118h9M552 106v38M522 118h8M557 120h8M384 211h36M504 211h36M450 214h24M384 222h36M504 222h36" stroke="#8e93ac" stroke-width="3" fill="none" />
              <path d="M388 224v30M412 224v30M510 224v30M534 224v30" stroke="#aeb2cc" stroke-width="2" />
              <path d="M369 144h18v9h-18zM537 144h17v9h-17z" fill="#173a6b" />
              <rect x="277" y="433" width="90" height="110" rx="4" fill="#b3b4b5" /><rect x="365" y="475" width="10" height="20" fill="#b3b4b5" />
              <circle cx="321" cy="484" r="34" fill="#cbcccd" stroke="#909192" stroke-width="2" /><circle cx="321" cy="484" r="22" fill="#dcdcdd" stroke="#a5a5a6" stroke-width="2" /><circle cx="321" cy="484" r="3" fill="#888" />
              <rect x="577" y="312" width="98" height="40" fill="#1e1f20" /><circle cx="563" cy="372" r="6" fill="#e9ecef" />
              <path d="M577 310v-8h32M642 302h32v8" fill="none" stroke="#e9ecef" stroke-width="4" />
              <path d="M620 425v-14l8 8 8-6M644 410v12M655 408v14l8-12v14" fill="none" stroke="#c9cfe0" stroke-width="2" />
              <circle cx="722" cy="486" r="3" fill="#8e6c12" />
            </g>

            <!-- QFN rotated by 45 degrees, BLE button -->
            <g transform="translate(970 340) scale(.33333)">
              <path d="M80 207L195 93M239 96L352 207M352 254L238 368M195 368L82 254" stroke="#e2b93d" stroke-width="15" stroke-dasharray="6 4.500" fill="none" />
              <path d="M216 86L361 230 216 374 70 230z" fill="#040404" />
              <path d="M352 216l16 14-10 8z" fill="#dfa640" />
              <circle cx="531" cy="141" r="9" fill="#4c4c4e" />
              <circle cx="366" cy="522" r="51" fill="#d2d2d3" />
              <path d="M481 318v-8l6 6M492 308v10M500 318v-8l8 8v-10" stroke="#d5d5dd" stroke-width="2" fill="none" />
            </g>

            <!-- buzzer, fiducial, LED solder bridges -->
            <g transform="translate(970 560) scale(.33333)">
              <circle cx="96" cy="167" r="19" fill="#dfb233" /><circle cx="141" cy="167" r="19" fill="#dfb233" />
              <path d="M80 167h32M125 167h32" stroke="#e9ecef" stroke-width="5" />
              <circle cx="360" cy="191" r="131" fill="#e9ecef" /><circle cx="361" cy="193" r="130" fill="#4a4a4b" />
              <circle cx="360" cy="117" r="31" fill="#858586" /><path d="M360 85v64M328 117h64" stroke="#4a4a4b" stroke-width="5" />
              <circle cx="358" cy="199" r="30" fill="#3e3e3f" /><circle cx="360" cy="192" r="26" fill="#d5d6d6" />
              <circle cx="240" cy="282" r="7" fill="#e9ecef" /><circle cx="241" cy="472" r="7" fill="#e9ecef" />
              <path d="M535 210l6 4-6 4M548 208v10M536 228l5 5M545 240l4-8" stroke="#d5d5dd" stroke-width="2" fill="none" />
              <circle cx="567" cy="402" r="41" fill="none" stroke="#e9ecef" stroke-width="4" />
              <circle cx="567" cy="361" r="14" fill="#e9ecef" /><circle cx="567" cy="442" r="14" fill="#e9ecef" /><circle cx="527" cy="402" r="14" fill="#e9ecef" /><circle cx="607" cy="402" r="14" fill="#e9ecef" />
            </g>

            <!-- wire connector -->
            <g transform="translate(970 730) scale(.33333)">
              <circle cx="370" cy="290" r="52" fill="#cdcdce" />
              <circle cx="543" cy="432" r="11" fill="#8c8a80" /><circle cx="611" cy="432" r="11" fill="#8c8a80" />
              <path d="M102 608h33M118.500 592v32" stroke="#e9ecef" stroke-width="7" />
              <path d="M188 462h353v271H188z" fill="none" stroke="#e9ecef" stroke-width="6" />
              <rect x="194" y="468" width="342" height="80" fill="#1b3b69" /><path d="M194 522h342" stroke="#e9ecef" stroke-width="4" />
              <g v-for="x in [262, 330, 398, 466]" :key="x"><circle :cx="x" cy="495" r="25" fill="#dfb233" /><circle :cx="x + 2" cy="495" r="15" fill="#2a2523" /></g>
              <path d="M195 468h18v80h-18zM515 468h18v80h-18z" fill="#8f8da8" />
              <rect x="192" y="522" width="346" height="28" fill="#82809a" />
              <rect v-for="x in [253, 321, 390, 459]" :key="x" :x="x" y="480" width="18" height="63" rx="5" fill="#a3a2bb" />
              <path d="M192 547h346v211H432v-27H297v27H192z" fill="#acabc2" />
              <path d="M297 732h135" stroke="#e9ecef" stroke-width="5" />
              <path d="M214 622v84h31M515 622v84h-34" fill="none" stroke="#84829c" stroke-width="3" />
              <path d="M516 264l6-2v6M596 262l6 2M598 270l6 2" stroke="#fff" stroke-width="3" fill="none" />
            </g>
            <g fill="#3a2f14"><g transform="translate(1091 315.700)"><circle v-for="(d, i) in dots" :key="i" :cx="d[0]" :cy="d[1]" r="1" /></g><g transform="translate(1090.300 697.300)"><circle v-for="(d, i) in dots" :key="i" :cx="d[0]" :cy="d[1]" r="1" /></g></g>

            <!-- origin axes -->
            <path d="M953.500 197v-13.500L974 196.500V183.500" fill="none" stroke="#1a1ae0" />
            <path d="M989 210.500h27" stroke="#00dc00" stroke-width="4" /><path d="M1014 205.500l14 5-14 5z" fill="#00f000" />
            <path d="M1038 204l8 5h4" fill="none" stroke="#17d817" />
            <path d="M987 210v30" stroke="#e01010" stroke-width="4" /><path d="M982 237h10l-4.500 12z" fill="#e00d0d" />
            <path d="M978 258l8.500 6.500-8.500 6" fill="none" stroke="#e02020" />
            <circle cx="986" cy="206" r="5" fill="#0505c4" />
          </svg>
          <div class="hud">
            <div class="hl"><span v-fit="59" class="fit h1">x: 68.072</span><span v-fit="95" class="fit">dx:118.872 mm</span></div>
            <div class="hl"><span v-fit="58" class="fit h1">y:-28.626</span><span v-fit="95" class="fit">{{ 'dy: 47.574  mm' }}</span></div>
            <div class="hl sm"><span v-fit="274" class="fit">Snap: 0.025mm Hotspot Snap (All Layers): 0.25mm</span></div>
          </div>
        </div>
        <div class="layers">
          <span class="ls"><i /><em>LS</em></span>
          <span v-for="(l, i) in layers" :key="l.t" class="ltab" :class="{ on: i === 0 }"><i :style="{ background: l.c }" /><span v-fit="l.w" class="fit">{{ l.t }}</span></span>
          <span class="grow" />
          <span class="mb first"><svg width="27" height="15" viewBox="0 0 27 15" v-html="icons.snapf" /></span>
          <span v-for="b in maskBtns" :key="b.t" class="mb" :style="{ width: b.b + 'px' }"><span v-fit="b.w" class="fit">{{ b.t }}</span></span>
        </div>
      </section>

      <nav class="side">
        <span v-for="s in sideTabs" :key="s.t" class="stab" :style="{ height: s.h + 'px' }"><span v-fit="s.w" class="fit vert">{{ s.t }}</span></span>
      </nav>
    </main>

    <footer class="status">
      <span class="s1"><span v-fit="120" class="fit">X:67.97mm Y:-28.626mm</span></span>
      <span class="s2"><span v-fit="73" class="fit">Grid: 0.025mm</span></span>
      <span class="s3"><span v-fit="133" class="fit">(Hotspot Snap (All Layers))</span></span>
      <span class="s4" />
      <span class="grow" />
      <span class="sbs"><span v-for="b in statusBtns" :key="b.t" class="stb" :style="{ width: b.b + 'px' }"><span v-fit="b.w" class="fit"><u v-if="b.u === 0">{{ b.t[0] }}</u>{{ b.u === 0 ? b.t.slice(1) : b.t }}</span></span></span>
      <span class="stb more"><span v-fit="13" class="fit">&gt;&gt;</span></span>
    </footer>
    <div class="strip" />
  </div>
</template>

<style>
body { margin: 0; overflow: hidden; }
</style>

<style scoped>
.app { width: 1920px; height: 1043px; display: flex; flex-direction: column; background: #a8a8a8; font: 12px/16px "Open Sans", "Noto Sans", sans-serif; color: #101010; overflow: hidden; }
.app * { box-sizing: border-box; }
svg { display: block; flex: none; }
.fit { display: inline-block; white-space: pre; flex: none; }
.grow { flex: 1; }
.ic { width: 16px; height: 16px; }
.title { height: 23px; background: #fff; display: flex; align-items: center; color: #000; }
.logo { margin: 0 5px 0 2px; }
.winctl { margin: -3px 17px 0 auto; }
.bar { height: 26px; background: #f0f0f0; display: flex; align-items: center; color: #000; }
.grip { flex: none; width: 3px; height: 16px; margin-left: 3px; background: repeating-linear-gradient(#9c9c9c 0 1px, #f0f0f0 1px 2.5px); }
.dxp { margin: 0 4px 0 5px; }
.m { flex: none; margin-right: 16px; }
.dxp + .m { margin-right: 12px; }
.m u, .stb u { text-underline-offset: 2px; text-decoration-thickness: 1px; }
.g2 { margin-left: -2px; margin-right: 3px; }
.drop { width: 37px; flex: none; display: flex; align-items: center; }
.drop .tri { margin-left: 9px; }
.tri { flex: none; width: 0; height: 0; border: 3px solid transparent; border-top: 4px solid #111; border-bottom: 0; }
.tri.dim { border-top-color: #aaa; }
.tri.big { border-width: 4px 4px 0; }
.combo { flex: none; height: 19px; background: #fff; border: 0; display: flex; align-items: center; justify-content: space-between; padding: 0 3px; }
.path { width: 197px; margin-left: 2px; padding-right: 2px; margin-right: 3px; }
.big.ic { width: 17px; height: 17px; }
.big + .tri { margin: 0 7px 0 4px; }
.hm { margin-right: 7px; margin-left: -3px; }
.rf { margin-right: 5px; }
.cell { width: 23px; flex: none; display: flex; justify-content: center; }
.sep { flex: none; height: 22px; background: linear-gradient(90deg, #a0a0a0 1px, transparent 1px) 3px 0 no-repeat; }
.s8 { width: 8px; background-position: 4px 0; }
.ns { width: 147px; margin-left: 2px; }
.em { width: 146px; }
.g3 { margin-left: 8px; margin-right: -1px; }
.g4 { margin: 0 4px 0 7px; }
.nv { width: 122px; }
.vr { margin-left: 4px; }
.c1 { width: 87px; margin-left: 3px; }
.all { width: 168px; margin-left: 3px; }
.l1 { margin-left: 5px; }
.l2 { margin: 0 6px 0 6px; }
.work { height: 938px; display: flex; padding: 3px 3px 0; }
.panel { width: 292px; height: 935px; background: #dedede; display: flex; flex-direction: column; margin-right: 3px; }
.phead { height: 23px; background: linear-gradient(#b7d4e7, #a3c6dd); display: flex; align-items: center; justify-content: space-between; padding: 0 4px 0 5px; color: #111; }
.pform { padding: 10px 10px 0; height: 93px; display: flex; flex-direction: column; gap: 3px; }
.frow { display: flex; gap: 3px; height: 25px; flex: none; align-items: center; }
.inp { width: 201px; height: 25px; background: #f2f2f2; border: 1px solid #8d8d8d; display: flex; align-items: center; justify-content: space-between; padding: 0 7px 0 5px; }
.btn { width: 68px; height: 25px; border: 1px solid #a5a5a5; background: #dedede; display: flex; align-items: center; justify-content: center; }
.radios { gap: 0; height: 24px; }
.radio { width: 13px; height: 13px; border: 1px solid #222; border-radius: 50%; background: #fff; margin-right: 4px; }
.radio.on { background: radial-gradient(#222 0 3.2px, #fff 4px); }
.r2 { margin-left: 10px; }
.sb { width: 28px; height: 20px; border: 1px solid #a5a5a5; display: flex; align-items: center; justify-content: center; }
.sb.w { width: 35px; margin-left: 5px; justify-content: space-between; padding: 0 3px 0 1px; }
.vl { width: 1px; height: 14px; background: #999; }
.tree { margin: 0 0 0 11px; width: 271px; height: 791px; background: #fff; border: 1px solid #8e8e8e; padding: 5px 4px 0 5px; flex: none; }
.tr { height: 16px; display: flex; align-items: center; }
.ind { flex: none; display: flex; align-items: center; height: 16px; }
.d0 .ind { width: 11px; }
.d1 .ind { width: 23px; padding-left: 12px; }
.d2 .ind { width: 35px; }
.ex { width: 9px; height: 9px; border: 1px solid #555; background: #fff; font: 10px/7px "DejaVu Sans", sans-serif; text-align: center; color: #000; overflow: hidden; }
.d1 .ic { margin-left: 1px; width: 15px; }
.name { flex: 1; height: 16px; padding-left: 3px; border-bottom: 1px solid #e2e2e2; display: flex; align-items: center; }
.col { flex: none; height: 16px; border-left: 1px solid #dedede; border-bottom: 1px solid #e2e2e2; display: flex; align-items: center; padding-left: 2px; }
.c18 { width: 18px; }
.c17 { width: 18px; border-right: 1px solid #dedede; }
.root .name, .root .col { background: #99b3d1; border: 0; font-weight: 700; }
.sel .name, .sel .col { background: #3399ff; color: #fff; border: 0; }
.sel .c18 { padding-left: 3px; }
.lit { background: linear-gradient(#fff, #fff) 1px 1px / 9px 12px no-repeat; }
.ptabs { margin-top: 8px; height: 19px; background: #ededed; display: flex; }
.ptab { height: 18px; background: #fff; border-right: 1px solid #bbb; padding: 2px 6px 0; color: #555; border-radius: 0 0 3px 3px; }
.ptab.on { background: #dcdcdc; color: #000; }
.doc { width: 1591px; display: flex; flex-direction: column; height: 935px; }
.dtabs { height: 27px; border-bottom: 3px solid #dcdcdc; display: flex; padding-left: 5px; }
.dtab { display: flex; align-items: center; gap: 5px; margin-right: 10px; color: #fff; flex: none; height: 24px; }
.dtab .ic { width: 15px; }
.dtab.on { background: #dcdcdc; color: #000; padding: 0 5px; margin-left: -5px; gap: 4px; }
.dtab.on .ic { width: 16px; }
.canvas { height: 888px; background: linear-gradient(#b2a5a4, #786363); position: relative; }
.hud { position: absolute; left: 0; top: 0; width: 288px; height: 52px; background: linear-gradient(#837b7e, #7c7c82); border-right: 1px solid #7a6f70; border-bottom: 1px solid #7a6f70; color: #bdbd98; font: 600 13px/14px "Open Sans", sans-serif; padding: 7px 0 0 5px; }
.hl { height: 14px; display: flex; gap: 9px; }
.hl.sm { font-size: 11px; }
.layers { height: 20px; background: #efefef; display: flex; align-items: flex-start; }
.ls { width: 46px; height: 14px; margin: 3px 3px 0; border: 1px solid #6a6a6a; display: flex; background: #e4e4e4; }
.ls i { width: 25px; background: #f00; border-right: 1px solid #777; }
.ls em { font: 11px/13px "Open Sans", sans-serif; color: #777; padding-left: 4px; }
.ltab { height: 18px; background: #fff; border-right: 1px solid #aaa; display: flex; align-items: center; padding: 1px 3px 0 6px; color: #000; border-radius: 0 0 3px 3px; }
.ltab i { width: 10px; height: 10px; border: 1px solid #8e8e8e; margin-right: 5px; margin-top: -1px; }
.ltab .fit { margin-top: 1px; }
.ltab.on { background: #dcdcdc; font-weight: 700; }
.ltab.on i { margin-right: 6px; }
.mb { height: 20px; border: 1px solid #cfcbc6; border-left-width: 2px; display: flex; align-items: center; justify-content: center; color: #666; flex: none; }
.mb.first { width: 33px; }
.side { width: 25px; margin-left: 3px; background: #efefef; height: 935px; padding: 1px 2px 0 3px; display: flex; flex-direction: column; gap: 2px; }
.stab { flex: none; width: 20px; background: #fbfbfb; border: 1px solid #dcdcdc; display: flex; justify-content: center; align-items: center; color: #666; }
.vert { writing-mode: vertical-rl; line-height: 16px; }
.status { height: 27px; border-top: 3px solid #a8a8a8; background: #f0f0f0; display: flex; align-items: center; color: #000; box-shadow: inset 0 1px 0 #6d6d6d; }
.status .fit { margin-top: 1px; }
.s1 { margin-left: 5px; width: 132px; }
.s2 { width: 94px; }
.s3 { width: 254px; }
.s4 { width: 487px; height: 18px; border-left: 1px solid #999; border-right: 1px solid #999; }
.sbs { display: flex; border-left: 1px solid #d0d0d0; }
.stb { height: 18px; border: 1px solid #d0d0d0; border-left: 0; background: #fafafa; display: flex; align-items: center; justify-content: center; color: #606060; flex: none; }
.more { border-left: 1px solid #d0d0d0; width: 18px; margin: 0 4px 0 3px; }
.strip { height: 3px; background: linear-gradient(90deg, #0c0e04 0 48px, #3a3836 48px 390px, #0c0e04 390px 740px, #3a3a3a 740px 785px, #121212 785px); }
.silk { font-family: "DejaVu Sans Mono", monospace; font-weight: 700; fill: #e9ecef; }
</style>
